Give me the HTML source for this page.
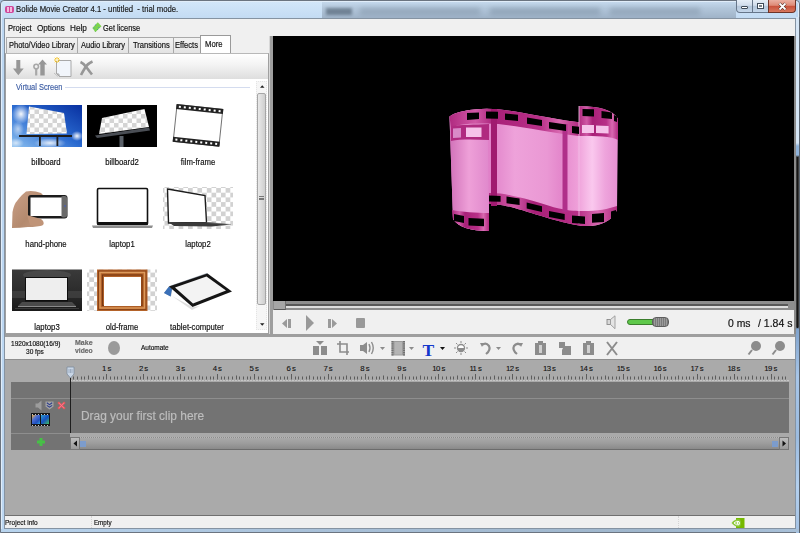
<!DOCTYPE html>
<html><head><meta charset="utf-8">
<style>
*{margin:0;padding:0;box-sizing:border-box}
html,body{width:800px;height:533px;overflow:hidden;background:#a9c6e3;font-family:"Liberation Sans",sans-serif;font-size:8.8px;color:#111}
.a{position:absolute}
.t{position:absolute;white-space:pre;line-height:1;transform-origin:0 0;-webkit-text-stroke:0.18px currentColor}
svg{position:absolute;overflow:visible}
.lbl{width:100px;text-align:center;transform:scaleX(.88);transform-origin:50% 0}
.rl{top:365.3px;width:40px;text-align:center;font-size:7.8px;letter-spacing:-0.55px;color:#111;-webkit-text-stroke:0.1px currentColor}
</style></head><body>
<!-- ===== window frame ===== -->
<div class="a" style="left:0;top:0;width:800px;height:533px;background:#bcd7f2;border:1px solid #6b7480;border-radius:4px 4px 0 0"></div>
<div class="a" style="left:1px;top:1px;width:798px;height:531px;border:1px solid rgba(255,255,255,.55);border-radius:3px 3px 0 0"></div>
<div class="a" style="left:2px;top:2px;width:794px;height:16px;background:linear-gradient(180deg,#d2e6f9,#c3dbf3)"></div>
<div class="a" style="left:796px;top:17px;width:4px;height:516px;background:linear-gradient(180deg,#d6e6f6 0px,#d6e6f6 126px,#8fb3da 129px,#8fb3da 138px,#3a3a3a 140px,#3a3a3a 310px,#7fa2cc 312px,#a8c6e8 360px,#9cbce0 420px,#b4d0ee 470px,#a4c2e4 516px)"></div>
<div class="a" style="left:797px;top:157px;width:1px;height:171px;background:#151515"></div>
<div class="a" style="left:799px;top:17px;width:1px;height:516px;background:#5a6470"></div>
<div class="a" style="left:1px;top:529px;width:798px;height:3px;background:linear-gradient(90deg,#b8d4ee 0%,#a8c0d8 40%,#9fb6cc 80%,#a8c0d8 100%)"></div>
<div class="a" style="left:322px;top:2px;width:414px;height:16px;background:linear-gradient(180deg,#c4d8ec 0%,#b2c6da 40%,#9fb3c8 100%)"></div>
<div class="a" style="left:326px;top:8px;width:26px;height:7px;background:#4a5a6c;filter:blur(1.5px);opacity:.6"></div>
<div class="a" style="left:360px;top:8px;width:120px;height:7px;background:#7a8ca0;filter:blur(2.5px);opacity:.45"></div>
<div class="a" style="left:490px;top:8px;width:110px;height:7px;background:#74879b;filter:blur(2.5px);opacity:.45"></div>
<div class="a" style="left:610px;top:8px;width:90px;height:7px;background:#7a8ca0;filter:blur(2.5px);opacity:.45"></div>
<div class="a" style="left:5px;top:6px;width:9px;height:7px;background:#d0489a;border-radius:2px"></div>
<div class="a" style="left:7px;top:7px;width:2px;height:5px;background:#f6b8de"></div>
<div class="a" style="left:10px;top:7px;width:2px;height:5px;background:#f6b8de"></div>
<div class="t" style="left:16.38px;top:4.52px;font-size:8.8px;transform:scaleX(0.88);color:#1b1b1b">Bolide Movie Creator 4.1 - untitled  - trial mode.</div>
<!-- window buttons -->
<div class="a" style="left:736px;top:0;width:17px;height:13px;border:1px solid #66768a;border-top:0;border-radius:0 0 0 4px;background:linear-gradient(#e6eef7 0%,#d0dceb 45%,#b4c6da 50%,#c4d6ea 100%)"></div>
<div class="a" style="left:752px;top:0;width:17px;height:13px;border:1px solid #66768a;border-top:0;background:linear-gradient(#e6eef7 0%,#d0dceb 45%,#b4c6da 50%,#c4d6ea 100%)"></div>
<div class="a" style="left:768px;top:0;width:28px;height:13px;border:1px solid #6e3428;border-top:0;border-radius:0 0 4px 0;background:linear-gradient(#eab0a2 0%,#de8a76 45%,#c8503a 50%,#d8785e 100%)"></div>
<div class="a" style="left:741px;top:6px;width:7px;height:3px;background:#fff;border:1px solid #3e4a58;border-radius:1px"></div>
<div class="a" style="left:757px;top:3px;width:7px;height:6px;background:#fff;border:1px solid #3e4a58"></div>
<div class="a" style="left:759px;top:5px;width:3px;height:2px;background:#7a828c"></div>
<svg style="left:778px;top:2px" width="9" height="9"><path d="M1.5 1.5L7.5 7.5M7.5 1.5L1.5 7.5" stroke="#40201a" stroke-width="3"/><path d="M1.5 1.5L7.5 7.5M7.5 1.5L1.5 7.5" stroke="#fff" stroke-width="1.8"/></svg>

<!-- ===== client ===== -->
<div class="a" style="left:4px;top:18px;width:792px;height:511px;background:#f0f0f0;border:1px solid #8593a2"></div>

<!-- menu -->
<div class="t" style="left:7.64px;top:23.77px;font-size:8.8px;transform:scaleX(0.863)">Project</div>
<div class="t" style="left:37.1px;top:23.77px;font-size:8.8px;transform:scaleX(0.92)">Options</div>
<div class="t" style="left:70.25px;top:23.77px;font-size:8.8px;transform:scaleX(0.93)">Help</div>
<svg style="left:88px;top:18px" width="16" height="16"><path d="M4.3 10L9.8 4.3L13.5 8.3L7.5 14Z" fill="#7cd44c"/><path d="M6 12.5L8 14L7.5 14Z" fill="#2a9a20"/><circle cx="7.5" cy="7" r=".6" fill="#4a8acc"/><circle cx="6" cy="10" r=".6" fill="#4a8acc"/><circle cx="10.8" cy="9.5" r=".6" fill="#4a8acc"/><circle cx="9.5" cy="11.5" r=".6" fill="#3aaa80"/></svg>
<div class="t" style="left:103.38px;top:23.77px;font-size:8.8px;transform:scaleX(0.846)">Get license</div>

<!-- tabs -->
<div class="a" style="left:5px;top:36px;width:265px;height:17px;background:#f0f0f0"></div>
<div class="a" style="left:6px;top:37px;width:72px;height:16px;background:linear-gradient(#f2f2f2,#e3e3e3);border:1px solid #a9a9a9;border-bottom:0"></div>
<div class="a" style="left:78px;top:37px;width:51px;height:16px;background:linear-gradient(#f2f2f2,#e3e3e3);border:1px solid #a9a9a9;border-bottom:0;border-left:0"></div>
<div class="a" style="left:129px;top:37px;width:45px;height:16px;background:linear-gradient(#f2f2f2,#e3e3e3);border:1px solid #a9a9a9;border-bottom:0;border-left:0"></div>
<div class="a" style="left:174px;top:37px;width:27px;height:16px;background:linear-gradient(#f2f2f2,#e3e3e3);border:1px solid #a9a9a9;border-bottom:0;border-left:0"></div>
<div class="a" style="left:200px;top:35px;width:31px;height:19px;background:#fff;border:1px solid #9a9a9a;border-bottom:0"></div>
<div class="t" style="left:8.8px;top:41.27px;font-size:8.8px;transform:scaleX(0.852)">Photo/Video Library</div>
<div class="t" style="left:81.2px;top:41.27px;font-size:8.8px;transform:scaleX(0.851)">Audio Library</div>
<div class="t" style="left:132.55px;top:41.27px;font-size:8.8px;transform:scaleX(0.859)">Transitions</div>
<div class="t" style="left:175.29px;top:41.27px;font-size:8.8px;transform:scaleX(0.86)">Effects</div>
<div class="t" style="left:204.59px;top:39.77px;font-size:8.8px;transform:scaleX(0.872)">More</div>

<!-- left panel -->
<div class="a" style="left:5px;top:53px;width:264px;height:281px;background:#fff;border:1px solid #a0a0a0;border-top-color:#b8b8b8"></div>
<div class="a" style="left:6px;top:54px;width:262px;height:25px;background:linear-gradient(#ffffff,#f4f4f4 40%,#dedede)"></div>
<!-- toolbar icons -->
<svg style="left:13px;top:60px" width="11" height="16"><path d="M3.3 0h4v8.5h3.4L5.3 15.2L0 8.5h3.3z" fill="#979797"/></svg>
<svg style="left:32px;top:59px" width="16" height="18"><path d="M10.5 0.5L15 5.5h-2.3V16.5H8.3V5.5H6z" fill="#979797"/><circle cx="4.2" cy="7.6" r="2.3" fill="none" stroke="#a8a8a8" stroke-width="1.6"/><path d="M4.2 10v6.5" stroke="#a8a8a8" stroke-width="2.2"/></svg>
<svg style="left:53px;top:56px" width="20" height="22"><path d="M3.5 4.5h14.5v16H6.5L3.5 17.5z" fill="#f1f5fb" stroke="#a8a8a8"/><path d="M3.5 17.5l3 3l-0.5-2.5z" fill="#ccc" stroke="#999" stroke-width=".6"/><path d="M1 17l4 3.5" stroke="#b8b8b8" stroke-width=".8"/><path d="M4 1v6M1 4h6M1.8 1.8l4.4 4.4M6.2 1.8l-4.4 4.4" stroke="#f4be10" stroke-width=".9"/><circle cx="4" cy="4" r="1" fill="#fff"/></svg>
<svg style="left:79px;top:60px" width="15" height="16"><path d="M13.5 1.5Q8 4 6 8Q3.5 12 2 15" stroke="#979797" stroke-width="2.6" fill="none"/><path d="M1.5 2Q5 3.5 8 8Q10.5 11.5 13 14.5" stroke="#979797" stroke-width="2.6" fill="none"/></svg>

<!-- Virtual screen header -->
<div class="t" style="left:15.78px;top:83.19px;font-size:8.6px;transform:scaleX(0.863);color:#3f5fa5">Virtual Screen</div>
<div class="a" style="left:65px;top:87px;width:185px;height:1px;background:#d4dcef"></div>

<!-- scrollbar -->
<div class="a" style="left:256px;top:81px;width:11px;height:249px;background:#f6f6f6;border:1px dotted #e4e4e4"></div>
<svg style="left:259.5px;top:85px" width="5" height="3"><path d="M0 2.8L4.5 2.8L2.25 0.3z" fill="#222"/></svg>
<div class="a" style="left:257px;top:93px;width:9px;height:212px;background:linear-gradient(90deg,#e9e9e9,#dcdcdc 50%,#cfcfcf);border:1px solid #a6a6a6;border-radius:2px"></div>
<div class="a" style="left:259px;top:196px;width:5px;height:4px;border-top:1px solid #777;border-bottom:1px solid #777"></div>
<div class="a" style="left:259px;top:198px;width:5px;height:1px;background:#777"></div>
<svg style="left:259.5px;top:323px" width="5" height="3"><path d="M0 0.3L4.5 0.3L2.25 2.8z" fill="#222"/></svg>

<!-- THUMBS -->
<svg style="left:0;top:0" width="800" height="533">
<defs>
<pattern id="chk" width="9.4" height="9.4" patternUnits="userSpaceOnUse"><rect width="9.4" height="9.4" fill="#fff"/><rect width="4.7" height="4.7" fill="#d2d2d2"/><rect x="4.7" y="4.7" width="4.7" height="4.7" fill="#d2d2d2"/></pattern>
<pattern id="chk5" width="9" height="9" patternUnits="userSpaceOnUse"><rect width="9" height="9" fill="#fdfdfd"/><rect width="4.5" height="4.5" fill="#d4d4d4"/><rect x="4.5" y="4.5" width="4.5" height="4.5" fill="#d4d4d4"/></pattern>
<linearGradient id="sky" x1="1" y1="0" x2="0" y2="1"><stop offset="0" stop-color="#0830a0"/><stop offset=".5" stop-color="#2a6ad0"/><stop offset="1" stop-color="#8cc0f0"/></linearGradient>
<radialGradient id="cl"><stop offset="0" stop-color="#fff" stop-opacity=".95"/><stop offset="1" stop-color="#fff" stop-opacity="0"/></radialGradient>
<linearGradient id="skin" x1="0" y1="0" x2="1" y2="1"><stop offset="0" stop-color="#caa088"/><stop offset=".6" stop-color="#b48a6e"/><stop offset="1" stop-color="#c49a80"/></linearGradient>
<linearGradient id="dk" x1="0" y1="0" x2="0" y2="1"><stop offset="0" stop-color="#3a3a3a"/><stop offset=".6" stop-color="#2a2a2a"/><stop offset="1" stop-color="#1a1a1a"/></linearGradient>
</defs>
<!-- billboard -->
<g transform="translate(12,105)">
<rect width="70" height="42" fill="url(#sky)"/>
<ellipse cx="9" cy="9" rx="9" ry="10" fill="url(#cl)"/>
<ellipse cx="6" cy="24" rx="6" ry="8" fill="url(#cl)" opacity=".6"/>
<ellipse cx="4" cy="38" rx="8" ry="5" fill="url(#cl)" opacity=".7"/>
<ellipse cx="65" cy="31" rx="6" ry="5" fill="url(#cl)"/>
<ellipse cx="38" cy="38" rx="16" ry="5" fill="url(#cl)" opacity=".9"/>
<path d="M17 1.5L52 8L55 28.5L14.5 29Z" fill="url(#chk5)"/>
<rect x="7" y="30" width="53" height="2" fill="#1d1d1d"/>
<rect x="27" y="30" width="1.8" height="11" fill="#1d1d1d"/>
<rect x="44.5" y="30" width="1.8" height="11" fill="#1d1d1d"/>
</g>
<!-- billboard2 -->
<g transform="translate(87,105)">
<rect width="70" height="42" fill="#000"/>
<path d="M15 13L57.5 4L62 22L12 29Z" fill="url(#chk5)"/>
<path d="M8 30.5L62 22.5L63 25.5L10 33Z" fill="#4a4e55"/>
<rect x="32.5" y="31" width="4" height="11" fill="#5a6068"/>
</g>
<!-- film-frame -->
<g transform="translate(198,125.4) rotate(6)">
<rect x="-23" y="-18.5" width="46" height="37" fill="#fff" stroke="#555" stroke-width=".8"/>
<rect x="-23.5" y="-19" width="47" height="5" fill="#222"/>
<rect x="-23.5" y="14" width="47" height="5" fill="#222"/>
<g fill="#fff"><rect x="-21" y="-17.5" width="2" height="2"/><rect x="-16" y="-17.5" width="2" height="2"/><rect x="-11" y="-17.5" width="2" height="2"/><rect x="-6" y="-17.5" width="2" height="2"/><rect x="-1" y="-17.5" width="2" height="2"/><rect x="4" y="-17.5" width="2" height="2"/><rect x="9" y="-17.5" width="2" height="2"/><rect x="14" y="-17.5" width="2" height="2"/><rect x="19" y="-17.5" width="2" height="2"/>
<rect x="-21" y="15.5" width="2" height="2"/><rect x="-16" y="15.5" width="2" height="2"/><rect x="-11" y="15.5" width="2" height="2"/><rect x="-6" y="15.5" width="2" height="2"/><rect x="-1" y="15.5" width="2" height="2"/><rect x="4" y="15.5" width="2" height="2"/><rect x="9" y="15.5" width="2" height="2"/><rect x="14" y="15.5" width="2" height="2"/><rect x="19" y="15.5" width="2" height="2"/></g>
</g>
<!-- hand-phone -->
<path d="M12 228L12.5 212Q14 204 17 201Q20 197 22 195L26 191.5Q33 190 41 193L44 196L30 203L28 216L40 220Q44 222 43 225Q38 227 28 227Q20 228 12 228Z" fill="url(#skin)"/>
<rect x="28" y="195" width="39.5" height="23.5" rx="3" fill="#1c1c1c"/>
<rect x="61" y="196" width="6" height="21.5" rx="2" fill="#6a6a6a"/>
<rect x="30.5" y="197.5" width="31" height="18.5" fill="#fff"/>
<circle cx="65" cy="206" r=".8" fill="#3a5ad0"/>
<path d="M27 215Q34 217 41 219Q45 222 43 225Q36 227 30 225Z" fill="#c09478"/>
<!-- laptop1 -->
<rect x="97.5" y="188.5" width="50" height="36" rx="1.2" fill="#fff" stroke="#111" stroke-width="1.6"/>
<rect x="97" y="222" width="51" height="2.6" fill="#111"/>
<path d="M92 225.5H153L152 228H93Z" fill="#8e8e8e"/>
<!-- laptop2 -->
<rect x="163" y="187" width="70" height="42" fill="url(#chk)"/>
<path d="M167.5 189L205 195.5L206.5 222.5L168.5 223Z" fill="#fff" stroke="#1d1d1d" stroke-width="1.4"/>
<path d="M169 222.5L207 222L231 224.5L212 226.5L174 226Z" fill="#3a3a3a"/><path d="M207 222.5L231 224.5" stroke="#888" stroke-width=".6"/>
<!-- laptop3 -->
<rect x="12" y="269.5" width="70" height="41.5" fill="url(#dk)"/>
<ellipse cx="47" cy="275" rx="24" ry="5" fill="#5a5a5a" opacity=".5"/>
<rect x="12" y="291" width="14" height="7" fill="#4a4a4a" opacity=".6"/>
<rect x="68" y="291" width="14" height="7" fill="#4a4a4a" opacity=".6"/>
<rect x="25" y="277" width="43" height="24.5" fill="#0e0e0e"/>
<rect x="26" y="278" width="41" height="22" fill="#eeeeee"/>
<path d="M22 302H72L76 306H18Z" fill="#4a4a4a"/>
<path d="M18 306.5H76" stroke="#8a8a8a" stroke-width="1.2"/>
<path d="M15 308.5H79" stroke="#3a3a3a" stroke-width="1"/>
<!-- old-frame -->
<rect x="87" y="269.5" width="70" height="41.5" fill="url(#chk)"/>
<rect x="97" y="269.5" width="50.5" height="41.5" fill="#b4632a"/>
<rect x="98.5" y="271" width="47.5" height="38.5" fill="none" stroke="#8a4418" stroke-width="1"/>
<rect x="100" y="272.5" width="44.5" height="35.5" fill="none" stroke="#dc9a5c" stroke-width="1.4"/>
<rect x="102.5" y="275" width="39.5" height="30.5" fill="none" stroke="#7a3810" stroke-width="1.2"/>
<rect x="104" y="277" width="37" height="29" fill="#fff"/>
<!-- tablet -->
<path d="M164 293L169.5 286L207 273L208 274.5L172 289L171 296.5Z" fill="#9aa4b0"/>
<path d="M164 293L169 286.5L172 289L170.5 296.5Z" fill="#3a70b8"/>
<path d="M169 286.5L207.5 273.5L232 291.5L192.5 307Z" fill="#151515"/>
<path d="M175 287.5L206.5 276.5L226 290.5L193 303.5Z" fill="#f3f3f3"/>
<path d="M172 296L192 310L200 306L192.5 307Z" fill="#c8c8c8" opacity=".6"/>
</svg>

<div class="t lbl" style="left:-3.75px;top:157.82px">billboard</div>
<div class="t lbl" style="left:72.20px;top:157.82px">billboard2</div>
<div class="t lbl" style="left:147.80px;top:157.82px">film-frame</div>
<div class="t lbl" style="left:-3.60px;top:239.72px">hand-phone</div>
<div class="t lbl" style="left:71.90px;top:239.72px">laptop1</div>
<div class="t lbl" style="left:147.80px;top:239.72px">laptop2</div>
<div class="t lbl" style="left:-3.20px;top:322.62px">laptop3</div>
<div class="t lbl" style="left:72.20px;top:322.62px">old-frame</div>
<div class="t lbl" style="left:147.30px;top:322.62px">tablet-computer</div>

<!-- splitter -->
<div class="a" style="left:269px;top:36px;width:4px;height:298px;background:#9e9e9e;border-left:1px solid #d8d8d8"></div>

<!-- preview -->
<div class="a" style="left:273px;top:36px;width:521px;height:265px;background:#000"></div>
<svg style="left:0;top:0" width="800" height="533">
<defs>
<linearGradient id="pk" gradientUnits="userSpaceOnUse" x1="489" y1="0" x2="618" y2="0"><stop offset="0" stop-color="#e080c8"/><stop offset=".2" stop-color="#eea2da"/><stop offset=".45" stop-color="#ea98d4"/><stop offset=".55" stop-color="#e488cc"/><stop offset=".68" stop-color="#ee9ed8"/><stop offset=".8" stop-color="#fac8ee"/><stop offset=".9" stop-color="#eea4dc"/><stop offset="1" stop-color="#e690d2"/></linearGradient>
<linearGradient id="pkl" gradientUnits="userSpaceOnUse" x1="449" y1="0" x2="489" y2="0"><stop offset="0" stop-color="#d070b8"/><stop offset=".5" stop-color="#eea0d8"/><stop offset="1" stop-color="#e088cc"/></linearGradient>
<linearGradient id="st" x1="0" y1="0" x2="1" y2="0"><stop offset="0" stop-color="#b02a80"/><stop offset=".2" stop-color="#d058a6"/><stop offset=".35" stop-color="#a82078"/><stop offset=".7" stop-color="#b83088"/><stop offset=".85" stop-color="#d868b0"/><stop offset="1" stop-color="#b02a80"/></linearGradient>
</defs>
<!-- body -->
<path d="M449.5 116.4C456 112 470 109 487.5 108.8C511 109 535 116 579 122.3L579 106.4C596 106 612 109 618 118.8L617 210C612 222 598 227 582 226C560 223 530 212 511 207C502 205 494 204 489 204L489 231C470 231 458 227 453 219Z" fill="url(#pk)"/>
<path d="M449.5 116.4C456 112 470 109 487.5 108.8L489 231C470 231 458 227 453 219Z" fill="url(#pkl)"/>
<!-- top strip (main + left curl back) -->
<path d="M449.5 116.4C456 112 470 109 487.5 108.8C511 109 535 116 579 122.3L579 136C540 131 512 124 487.5 123.5C470 123.5 458 124 451 128Z" fill="url(#st)"/>
<!-- left curl front strip -->
<path d="M451 126C460 125 475 124.5 489 124L489 140C475 139.5 460 139 451 141Z" fill="#b02a80"/>
<!-- right curl strip -->
<path d="M579 106.4C596 106 612 109 618 118.8L618 140C612 136 596 136 579 136Z" fill="url(#st)"/>
<!-- bottom strip main -->
<path d="M489 193C498 193 505 194 511 195.4C530 199 545 205 559 208.5C570 211 578 211 582.5 211C598 211 608 209 617 206L617 210C612 222 598 227 582 226C560 223 530 212 511 207C502 205 494 204 489 204Z" fill="url(#st)"/>
<path d="M489 193C498 193 505 194 511 195.4C530 199 545 205 559 208.5C570 211 578 211 582.5 211C598 211 608 209 617 206L617 210C612 222 598 227 582 226C560 223 530 212 511 207C502 205 494 204 489 204Z" fill="none"/>
<!-- left curl bottom strip -->
<path d="M452 210C462 212 476 213 489 213L489 231C470 231 458 227 453 219Z" fill="url(#st)"/>
<!-- vertical bands -->
<path d="M494 109V206" stroke="#a01a70" stroke-width="6"/>
<path d="M565 124V212" stroke="#b0308a" stroke-width="5"/>
<path d="M579 106V224" stroke="#f4c0e8" stroke-width="1.2" opacity=".7"/>
<!-- holes: top back -->
<g fill="#000">
<path d="M467 113L479 112.5V119L467 120Z"/>
<path d="M486 111.6L498 111.8V118.8L486 118.6Z"/>
<path d="M505 113.5L518 114.8V121L505 119.8Z"/>
<path d="M527 117.6L542 120V126L527 123.8Z"/>
<path d="M549 122L566 124.5V131L549 128.6Z"/>
<path d="M572 126L579 126.8V134L572 133Z"/>
<path d="M582.5 109L594 109.3V116.4L582.5 116Z"/>
<path d="M601.5 111L612 112.5V119L601.5 118Z"/>
<path d="M614 115L617 116.5V122L614 121Z"/>
<!-- bottom -->
<path d="M454 214L464 216V223L454 221Z"/>
<path d="M468.5 218L484 218.8V226.3L468.5 225.5Z"/>
<path d="M489 195.4L500.6 195.9V201.8L489 201.4Z"/>
<path d="M506.5 196.6L519.6 198.4V205L506.5 203.2Z"/>
<path d="M526.7 202.6L542 206.2V212L526.7 208.6Z"/>
<path d="M549 211L564.7 214V220L549 217Z"/>
<path d="M572 215.6L585 216.4V224L572 223Z"/>
<path d="M592 214L604 213V222L592 222.8Z"/>
<path d="M611 211.5L616 210V218L611 219Z"/>
</g>
<!-- light front holes in curls -->
<g fill="#f6c2ea">
<path d="M466 127.5L481.5 127.5V137L466 137Z"/>
<path d="M453 128.5L461 128V137.5L453 138Z" fill="#d98ac8"/>
<path d="M582 125L594 125V133L582 133Z"/>
<path d="M596 125.5L608.6 126V133.5L596 133Z"/>
</g>
</svg>


<!-- seek bar -->
<div class="a" style="left:273px;top:301px;width:523px;height:9px;background:#8e8e8e"></div>
<div class="a" style="left:274px;top:304px;width:514px;height:2px;background:#585858"></div>
<div class="a" style="left:274px;top:306px;width:514px;height:1.5px;background:#dedede"></div>
<div class="a" style="left:274px;top:301px;width:12px;height:9px;background:#a6a6a6;border-bottom:1px solid #5a5a5a;border-right:1px solid #707070"></div>
<div class="a" style="left:794px;top:36px;width:2px;height:298px;background:#8a8a8a"></div>
<!-- controls -->
<div class="a" style="left:273px;top:310.5px;width:521px;height:23.5px;background:#f0f0f0"></div>
<svg style="left:282px;top:318px" width="10" height="11"><path d="M0 5.5L5 1v9z" fill="#9a9a9a"/><rect x="6" y="1" width="3" height="9" fill="#9a9a9a"/></svg>
<svg style="left:305px;top:314px" width="10" height="18"><path d="M1 1L9 9L1 17z" fill="#999"/></svg>
<svg style="left:328px;top:318px" width="10" height="11"><rect x="0" y="1" width="3" height="9" fill="#9a9a9a"/><path d="M4 1l5 4.5L4 10z" fill="#9a9a9a"/></svg>
<div class="a" style="left:356px;top:318px;width:9px;height:10px;background:#999;border-radius:1px"></div>
<!-- volume -->
<svg style="left:606px;top:315px" width="11" height="15"><rect x="1" y="4.5" width="3.5" height="5" fill="#d8d8d8" stroke="#8a8a8a" stroke-width=".9"/><path d="M4.5 4.5L9 0.8V13.7L4.5 9.5Z" fill="#e4e4e4" stroke="#9a9a9a" stroke-width=".9"/></svg>
<div class="a" style="left:627px;top:319px;width:40px;height:6px;background:#5ec84a;border:1px solid #3b7d2d;border-radius:3px"></div>
<div class="a" style="left:652px;top:317px;width:17px;height:10px;background:repeating-linear-gradient(90deg,#7a7a7a 0 1px,#9b9b9b 1px 2px);border:1px solid #5e5e5e;border-radius:4px"></div>
<div class="t" style="left:728.28px;top:317.97px;font-size:10.5px;transform:scaleX(0.989);color:#111">0 ms</div>
<div class="t" style="left:757.8px;top:317.97px;font-size:10.5px;transform:scaleX(1.002);color:#111">/ 1.84 s</div>

<!-- horizontal splitter -->
<div class="a" style="left:5px;top:333.5px;width:790px;height:3.5px;background:#9e9e9e"></div>

<!-- timeline toolbar -->
<div class="a" style="left:5px;top:337px;width:790px;height:23px;background:#f0f0f0"></div>
<div class="t" style="left:10.88px;top:340.01px;font-size:7.4px;transform:scaleX(0.885)">1920x1080(16/9)</div>
<div class="t" style="left:26.34px;top:347.91px;font-size:7.4px;transform:scaleX(0.887)">30 fps</div>
<div class="t" style="left:74.6px;top:339.11px;font-size:7.4px;transform:scaleX(0.95);color:#6a6a6a;font-weight:bold">Make</div>
<div class="t" style="left:74.7px;top:347.11px;font-size:7.4px;transform:scaleX(0.92);color:#6a6a6a;font-weight:bold">video</div>
<div class="a" style="left:108px;top:341px;width:12px;height:14px;background:#9a9a9a;border-radius:50%"></div>
<div class="t" style="left:141.0px;top:343.71px;font-size:7.4px;transform:scaleX(0.876)">Automate</div>
<svg style="left:0;top:0" width="800" height="533">
<g fill="#8c8c8c" stroke="none">
<!-- split -->
<path d="M313 346h6v9h-6zM321 346h6v9h-6z"/><path d="M316 341h8l-4 4z"/>
<!-- crop -->
<path d="M340 341v11h9M337 344h10v11" fill="none" stroke="#8c8c8c" stroke-width="1.6"/>
<!-- volume -->
<path d="M360 345h3l4-3v12l-4-3h-3z"/><path d="M369 344q2 4 0 8M371.5 342q3.5 6 0 12" fill="none" stroke="#8c8c8c" stroke-width="1.4"/>
<path d="M380 347h5l-2.5 3z" fill="#8c8c8c"/>
<!-- film -->
<rect x="391.5" y="341" width="13.5" height="14.5" fill="#9c9c9c"/><rect x="394.5" y="342" width="7.5" height="12.5" fill="#b4b4b4"/><path d="M392.5 341v14.5M404 341v14.5" stroke="#707070" stroke-width="2" stroke-dasharray="1.2 1"/>
<path d="M409 347h5l-2.5 3z"/>
<!-- brightness -->
<circle cx="461" cy="348" r="3.5" fill="#fff" stroke="#8c8c8c" stroke-width="1.3"/><path d="M461 348m-3.5 0a3.5 3.5 0 0 0 7 0" />
<path d="M461 341v2M461 353v2M454 348h2M466 348h2M456 343l1.5 1.5M464.5 351.5l1.5 1.5M466 343l-1.5 1.5M457.5 351.5l-1.5 1.5" stroke="#8c8c8c" stroke-width="1"/>
<!-- undo -->
<path d="M482 345q4-3 7 1q2 4-3 8" fill="none" stroke="#8c8c8c" stroke-width="2.2"/><path d="M480 343l4 0l-2 4z"/>
<path d="M496 347h5l-2.5 3z"/>
<!-- redo -->
<path d="M521 345q-4-3-7 1q-2 4 3 8" fill="none" stroke="#8c8c8c" stroke-width="2.2"/><path d="M523 343l-4 0l2 4z"/>
<!-- clip icons -->
<rect x="535" y="343" width="11" height="12"/><rect x="538" y="341" width="5" height="3"/><rect x="539" y="345" width="3" height="8" fill="#d0d0d0"/>
<path d="M559 342h6v6h-6z"/><path d="M564 346h7v9h-9v-5z"/>
<rect x="583" y="343" width="11" height="12"/><rect x="586" y="341" width="5" height="3"/><rect x="587" y="345" width="3" height="8" fill="#d0d0d0"/>
<!-- X -->
<path d="M607 342l10 13M617 342l-10 13" stroke="#8c8c8c" stroke-width="2"/>
<!-- zoom -->
<circle cx="756" cy="346" r="5"/><path d="M752 350l-3.5 4.5" stroke="#8c8c8c" stroke-width="2"/>
<circle cx="780" cy="346" r="5"/><path d="M776 350l-3.5 4.5" stroke="#8c8c8c" stroke-width="2"/>
</g>
<!-- T -->
<text x="422.5" y="356" font-family="Liberation Serif" font-weight="bold" font-size="17.5" fill="#1438cc">T</text>
<path d="M440 347h5l-2.5 3z" fill="#111"/>
</svg>


<!-- timeline -->
<div class="a" style="left:5px;top:360px;width:790px;height:155px;background:#aaaaaa"></div>
<div class="a" style="left:5px;top:359px;width:790px;height:1px;background:#8e8e8e"></div>
<svg style="left:0;top:0" width="800" height="533">
<path d="M70.5 374.0V379.5 M73.5 376.5V379.5 M77.5 376.5V379.5 M81.5 376.5V379.5 M84.5 376.5V379.5 M88.5 375.5V379.5 M92.5 376.5V379.5 M95.5 376.5V379.5 M99.5 376.5V379.5 M103.5 376.5V379.5 M106.5 374.0V379.5 M110.5 376.5V379.5 M114.5 376.5V379.5 M117.5 376.5V379.5 M121.5 376.5V379.5 M125.5 375.5V379.5 M129.5 376.5V379.5 M132.5 376.5V379.5 M136.5 376.5V379.5 M140.5 376.5V379.5 M143.5 374.0V379.5 M147.5 376.5V379.5 M151.5 376.5V379.5 M154.5 376.5V379.5 M158.5 376.5V379.5 M162.5 375.5V379.5 M165.5 376.5V379.5 M169.5 376.5V379.5 M173.5 376.5V379.5 M177.5 376.5V379.5 M180.5 374.0V379.5 M184.5 376.5V379.5 M188.5 376.5V379.5 M191.5 376.5V379.5 M195.5 376.5V379.5 M199.5 375.5V379.5 M202.5 376.5V379.5 M206.5 376.5V379.5 M210.5 376.5V379.5 M213.5 376.5V379.5 M217.5 374.0V379.5 M221.5 376.5V379.5 M224.5 376.5V379.5 M228.5 376.5V379.5 M232.5 376.5V379.5 M236.5 375.5V379.5 M239.5 376.5V379.5 M243.5 376.5V379.5 M247.5 376.5V379.5 M250.5 376.5V379.5 M254.5 374.0V379.5 M258.5 376.5V379.5 M261.5 376.5V379.5 M265.5 376.5V379.5 M269.5 376.5V379.5 M272.5 375.5V379.5 M276.5 376.5V379.5 M280.5 376.5V379.5 M284.5 376.5V379.5 M287.5 376.5V379.5 M291.5 374.0V379.5 M295.5 376.5V379.5 M298.5 376.5V379.5 M302.5 376.5V379.5 M306.5 376.5V379.5 M309.5 375.5V379.5 M313.5 376.5V379.5 M317.5 376.5V379.5 M320.5 376.5V379.5 M324.5 376.5V379.5 M328.5 374.0V379.5 M331.5 376.5V379.5 M335.5 376.5V379.5 M339.5 376.5V379.5 M343.5 376.5V379.5 M346.5 375.5V379.5 M350.5 376.5V379.5 M354.5 376.5V379.5 M357.5 376.5V379.5 M361.5 376.5V379.5 M365.5 374.0V379.5 M368.5 376.5V379.5 M372.5 376.5V379.5 M376.5 376.5V379.5 M379.5 376.5V379.5 M383.5 375.5V379.5 M387.5 376.5V379.5 M391.5 376.5V379.5 M394.5 376.5V379.5 M398.5 376.5V379.5 M402.5 374.0V379.5 M405.5 376.5V379.5 M409.5 376.5V379.5 M413.5 376.5V379.5 M416.5 376.5V379.5 M420.5 375.5V379.5 M424.5 376.5V379.5 M427.5 376.5V379.5 M431.5 376.5V379.5 M435.5 376.5V379.5 M438.5 374.0V379.5 M442.5 376.5V379.5 M446.5 376.5V379.5 M450.5 376.5V379.5 M453.5 376.5V379.5 M457.5 375.5V379.5 M461.5 376.5V379.5 M464.5 376.5V379.5 M468.5 376.5V379.5 M472.5 376.5V379.5 M475.5 374.0V379.5 M479.5 376.5V379.5 M483.5 376.5V379.5 M486.5 376.5V379.5 M490.5 376.5V379.5 M494.5 375.5V379.5 M498.5 376.5V379.5 M501.5 376.5V379.5 M505.5 376.5V379.5 M509.5 376.5V379.5 M512.5 374.0V379.5 M516.5 376.5V379.5 M520.5 376.5V379.5 M523.5 376.5V379.5 M527.5 376.5V379.5 M531.5 375.5V379.5 M534.5 376.5V379.5 M538.5 376.5V379.5 M542.5 376.5V379.5 M546.5 376.5V379.5 M549.5 374.0V379.5 M553.5 376.5V379.5 M557.5 376.5V379.5 M560.5 376.5V379.5 M564.5 376.5V379.5 M568.5 375.5V379.5 M571.5 376.5V379.5 M575.5 376.5V379.5 M579.5 376.5V379.5 M582.5 376.5V379.5 M586.5 374.0V379.5 M590.5 376.5V379.5 M593.5 376.5V379.5 M597.5 376.5V379.5 M601.5 376.5V379.5 M605.5 375.5V379.5 M608.5 376.5V379.5 M612.5 376.5V379.5 M616.5 376.5V379.5 M619.5 376.5V379.5 M623.5 374.0V379.5 M627.5 376.5V379.5 M630.5 376.5V379.5 M634.5 376.5V379.5 M638.5 376.5V379.5 M641.5 375.5V379.5 M645.5 376.5V379.5 M649.5 376.5V379.5 M653.5 376.5V379.5 M656.5 376.5V379.5 M660.5 374.0V379.5 M664.5 376.5V379.5 M667.5 376.5V379.5 M671.5 376.5V379.5 M675.5 376.5V379.5 M678.5 375.5V379.5 M682.5 376.5V379.5 M686.5 376.5V379.5 M689.5 376.5V379.5 M693.5 376.5V379.5 M697.5 374.0V379.5 M700.5 376.5V379.5 M704.5 376.5V379.5 M708.5 376.5V379.5 M712.5 376.5V379.5 M715.5 375.5V379.5 M719.5 376.5V379.5 M723.5 376.5V379.5 M726.5 376.5V379.5 M730.5 376.5V379.5 M734.5 374.0V379.5 M737.5 376.5V379.5 M741.5 376.5V379.5 M745.5 376.5V379.5 M748.5 376.5V379.5 M752.5 375.5V379.5 M756.5 376.5V379.5 M760.5 376.5V379.5 M763.5 376.5V379.5 M767.5 376.5V379.5 M771.5 374.0V379.5 M774.5 376.5V379.5 M778.5 376.5V379.5 M782.5 376.5V379.5 M785.5 376.5V379.5" stroke="#5c5c5c" stroke-width="1"/>
<path d="M70 380.5H789" stroke="#c6c6c6" stroke-width="1" stroke-dasharray="2 1"/>
</svg>
<div class="t rl" style="left:86.4px">1 s</div>
<div class="t rl" style="left:123.3px">2 s</div>
<div class="t rl" style="left:160.2px">3 s</div>
<div class="t rl" style="left:197.1px">4 s</div>
<div class="t rl" style="left:234.0px">5 s</div>
<div class="t rl" style="left:270.9px">6 s</div>
<div class="t rl" style="left:307.8px">7 s</div>
<div class="t rl" style="left:344.7px">8 s</div>
<div class="t rl" style="left:381.6px">9 s</div>
<div class="t rl" style="left:418.5px">10 s</div>
<div class="t rl" style="left:455.4px">11 s</div>
<div class="t rl" style="left:492.3px">12 s</div>
<div class="t rl" style="left:529.2px">13 s</div>
<div class="t rl" style="left:566.1px">14 s</div>
<div class="t rl" style="left:603.0px">15 s</div>
<div class="t rl" style="left:639.9px">16 s</div>
<div class="t rl" style="left:676.8px">17 s</div>
<div class="t rl" style="left:713.7px">18 s</div>
<div class="t rl" style="left:750.6px">19 s</div>
<!-- tracks -->
<div class="a" style="left:11px;top:382px;width:778px;height:16px;background:#737373"></div>
<div class="a" style="left:11px;top:398px;width:778px;height:1px;background:#8e8e8e"></div>
<div class="a" style="left:11px;top:399px;width:778px;height:34px;background:#737373"></div>
<div class="a" style="left:11px;top:434px;width:59px;height:16px;background:#737373"></div>
<div class="a" style="left:11px;top:433px;width:59px;height:1px;background:#8e8e8e"></div>
<!-- h scrollbar -->
<div class="a" style="left:70px;top:437px;width:719px;height:13px;background:linear-gradient(#a9a9a9,#9c9c9c 50%,#8a8a8a);border-bottom:1px solid #6c6c6c;border-top:1px dotted #b8b8b8"></div>
<div class="a" style="left:70px;top:437px;width:10px;height:13px;background:linear-gradient(#bdbdbd,#9a9a9a);border:1px solid #777"></div>
<svg style="left:73px;top:440px" width="5" height="7"><path d="M4 0.5V6.5L0.5 3.5Z" fill="#111"/></svg>
<div class="a" style="left:80px;top:441px;width:6px;height:6px;background:#7c9ccc"></div>
<div class="a" style="left:779px;top:437px;width:10px;height:13px;background:linear-gradient(#bdbdbd,#9a9a9a);border:1px solid #777"></div>
<svg style="left:782px;top:440px" width="5" height="7"><path d="M0.5 0.5V6.5L4 3.5Z" fill="#111"/></svg>
<div class="a" style="left:772px;top:441px;width:6px;height:6px;background:#7c9ccc"></div>
<!-- playhead -->
<div class="a" style="left:70px;top:378px;width:1px;height:55px;background:#1e1e1e"></div>
<svg style="left:66px;top:366px" width="9" height="13"><path d="M1 1H8V8L4.5 12L1 8Z" fill="#c9d6e6" stroke="#7f8da0" stroke-width=".8"/><path d="M3 3V7M4.5 3V7M6 3V7" stroke="#8090a8" stroke-width=".6"/></svg>
<!-- header icons -->
<svg style="left:35px;top:400px" width="7" height="11"><path d="M0.5 3.5H3L6.5 0.5V10.5L3 7.5H0.5Z" fill="#9c9c9c"/></svg>
<svg style="left:45px;top:401px" width="9" height="9"><path d="M0.5 0.5H8.5V5.5L4.5 8.5L0.5 5.5Z" fill="#a4a4a4"/><path d="M1.8 1.8L4.5 3.6L7.2 1.8M1.8 4.4L4.5 6.2L7.2 4.4" stroke="#2c3c8c" stroke-width="1.1" fill="none"/></svg>
<svg style="left:57px;top:401px" width="9" height="9"><path d="M1.2 1.2L7.8 7.8M7.8 1.2L1.2 7.8" stroke="#ec5a5a" stroke-width="2.2"/><path d="M2 2L7 7M7 2L2 7" stroke="#f07aa0" stroke-width=".8"/></svg>
<div class="a" style="left:31px;top:413px;width:19px;height:13px;background:#161616"></div>
<div class="a" style="left:32px;top:415px;width:8px;height:9px;background:linear-gradient(135deg,#f0b040 0%,#5070d0 35%,#2050c0 70%,#30a0e0)"></div>
<div class="a" style="left:41px;top:415px;width:8px;height:9px;background:linear-gradient(135deg,#30a0d0,#1850c0 50%,#40c060)"></div>
<div class="a" style="left:32px;top:413.5px;width:17px;height:1px;background:repeating-linear-gradient(90deg,#c8c8c8 0 1px,transparent 1px 3px)"></div>
<div class="a" style="left:32px;top:424.5px;width:17px;height:1px;background:repeating-linear-gradient(90deg,#c8c8c8 0 1px,transparent 1px 3px)"></div>
<svg style="left:36px;top:437px" width="10" height="10"><path d="M5 1V9M1 5H9" stroke="#46c046" stroke-width="3"/></svg>
<div class="t" style="left:81.05px;top:409.56px;font-size:12.4px;transform:scaleX(0.961);color:#bdbdbd">Drag your first clip here</div>


<!-- status bar -->
<div class="a" style="left:5px;top:515px;width:790px;height:13px;background:#f0f0f0;border-top:1px solid #707070"></div>
<div class="t" style="left:5.1px;top:518.7px;font-size:7.4px;transform:scaleX(0.886)">Project info</div>
<div class="a" style="left:91px;top:516px;width:1px;height:12px;border-left:1px dotted #d4d4d4"></div>
<div class="t" style="left:93.9px;top:518.7px;font-size:7.4px;transform:scaleX(0.835)">Empty</div>
<div class="a" style="left:678px;top:516px;width:1px;height:12px;border-left:1px dotted #d4d4d4"></div>
<svg style="left:731px;top:517.5px" width="14" height="10"><rect x="5" y="0" width="8.5" height="10" fill="#76b900"/><path d="M0.5 5Q4 0.5 9 1.5Q11 5 9 8.5Q4 9.5 0.5 5z" fill="#8cc83a"/><path d="M3 5Q5.5 2.5 8 3.5Q9 5 8 6.8Q5.5 7.5 3 5z" fill="none" stroke="#fff" stroke-width="1"/><circle cx="6.5" cy="5" r="1" fill="#fff"/></svg>
</body></html>
